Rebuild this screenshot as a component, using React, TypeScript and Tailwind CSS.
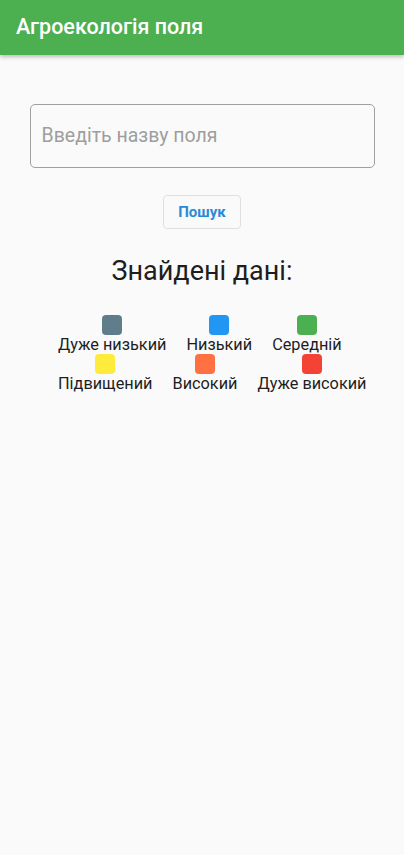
import React from "react";

const rows = [
  [
    { label: "Дуже низький", color: "bg-[#607d8b]" },
    { label: "Низький", color: "bg-[#2196f3]" },
    { label: "Середній", color: "bg-[#4caf50]" },
  ],
  [
    { label: "Підвищений", color: "bg-[#ffeb3b]" },
    { label: "Високий", color: "bg-[#ff7043]" },
    { label: "Дуже високий", color: "bg-[#f44336]" },
  ],
];

export default function App() {
  return (
    <div
      className="w-[404px] h-[855px] bg-[#fafafa] flex flex-col"
      style={{ fontFamily: "Roboto, 'Noto Sans', sans-serif" }}
    >
      <div className="h-[55px] bg-[#4caf50] flex items-center px-4 shadow-[0_2px_4px_rgba(0,0,0,0.25)] relative z-10">
        <span className="text-white text-[21.5px] font-medium">Агроекологія поля</span>
      </div>
      <div className="flex flex-col items-center pt-[49px]">
        <div className="w-[345px] h-[64px] border-[1.5px] border-[#a0a0a0] rounded-[5px] flex items-center px-[11px]">
          <span className="text-[19.5px] text-[#9e9e9e]">Введіть назву поля</span>
        </div>
        <div className="mt-[27px] w-[78px] h-[34px] border border-[#e0e0e0] rounded-[4px] flex items-center justify-center">
          <span className="text-[15px] font-bold text-[#2b8ad6]">Пошук</span>
        </div>
        <div className="mt-[26px] text-[27px] text-[#1e1e1e] leading-[32px]">Знайдені дані:</div>
      </div>
      <div className="flex flex-col pl-[58px] mt-[28px]">
        {rows.map((row, i) => (
          <div key={i} className="flex gap-5">
            {row.map((it) => (
              <div key={it.label} className="flex flex-col items-center">
                <div className={`w-5 h-5 rounded-[4px] ${it.color}`} />
                <span className="text-[16.3px] leading-[18px] pt-[1px] text-[#1e1e1e]">{it.label}</span>
              </div>
            ))}
          </div>
        ))}
      </div>
    </div>
  );
}
